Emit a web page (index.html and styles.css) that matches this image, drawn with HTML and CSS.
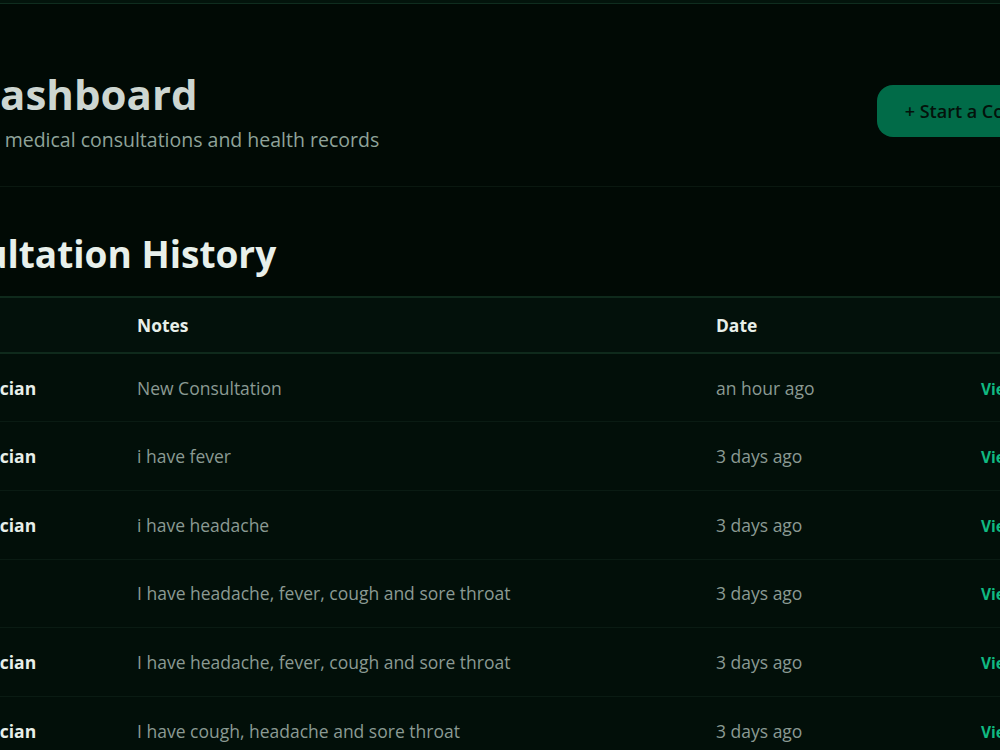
FILE: index.html
```html
<!DOCTYPE html>
<html lang="en">
<head>
  <meta charset="UTF-8">
  <meta name="viewport" content="width=device-width, initial-scale=1.0">
  <title>Dashboard</title>
  <link rel="stylesheet" href="styles.css">
</head>
<body>
  <div class="topbar"></div>
  <div class="page">
    <header class="dash-header">
      <div class="dash-title">
        <h1>Dashboard</h1>
        <p>Your medical consultations and health records</p>
      </div>
      <button class="start-btn">+ Start a Consultation</button>
    </header>

    <section class="history">
      <h2>Consultation History</h2>
      <table class="history-table">
        <thead>
          <tr><th class="c-doc">Doctor</th><th class="c-notes">Notes</th><th class="c-date">Date</th><th class="c-act"></th></tr>
        </thead>
        <tbody>
          <tr><td class="c-doc">General Physician</td><td class="c-notes">New Consultation</td><td class="c-date">an hour ago</td><td class="c-act"><a href="#">View Report</a></td></tr>
          <tr><td class="c-doc">General Physician</td><td class="c-notes">i have fever</td><td class="c-date">3 days ago</td><td class="c-act"><a href="#">View Report</a></td></tr>
          <tr><td class="c-doc">General Physician</td><td class="c-notes">i have headache</td><td class="c-date">3 days ago</td><td class="c-act"><a href="#">View Report</a></td></tr>
          <tr><td class="c-doc"></td><td class="c-notes">I have headache, fever, cough and sore throat</td><td class="c-date">3 days ago</td><td class="c-act"><a href="#">View Report</a></td></tr>
          <tr><td class="c-doc">General Physician</td><td class="c-notes">I have headache, fever, cough and sore throat</td><td class="c-date">3 days ago</td><td class="c-act"><a href="#">View Report</a></td></tr>
          <tr><td class="c-doc">General Physician</td><td class="c-notes">I have cough, headache and sore throat</td><td class="c-date">3 days ago</td><td class="c-act"><a href="#">View Report</a></td></tr>
        </tbody>
      </table>
    </section>
  </div>
</body>
</html>
```

FILE: styles.css
```css
* { box-sizing: border-box; }
body { margin: 0; background: #010a05; font-family: "Open Sans", "Noto Sans", sans-serif; color: #e6eee9; overflow: hidden; }
.topbar { height: 4px; background: #03140c; border-bottom: 1px solid #0f2d1f; }

.page { width: 1300px; margin-left: -140px; }

.dash-header { display: flex; justify-content: space-between; align-items: center; padding: 32px 39px 0 109px; height: 183px; border-bottom: 1px solid #0a1810; }
.dash-title h1 { margin: 0; font-size: 42px; font-weight: 700; color: #cdd6d1; line-height: 50px; }
.dash-title p { margin: 7px 0 0 -12px; font-size: 19.5px; color: #8fa39a; }
.start-btn { background: #016b48; color: #04120b; border: none; border-radius: 16px; height: 52px; padding: 0 28px; font-family: inherit; font-size: 18px; font-weight: 600; }

.history { padding-top: 44px; }
.history h2 { margin: 0 0 19px 34px; font-size: 37px; font-weight: 700; color: #e8f0eb; line-height: 46px; }

.history-table { width: 100%; border-collapse: collapse; background: #020f09; border-top: 2px solid #0f2a1c; }
.history-table th { background: #03110b; text-align: left; font-size: 17.4px; font-weight: 700; color: #e8efe9; height: 56px; border-bottom: 2px solid #0f2a1c; padding: 0 20px; }
.history-table td { height: 68.7px; border-bottom: 1px solid #0a1b13; font-size: 17.5px; color: #8b9a93; padding: 0 20px; }
.history-table td.c-doc { font-weight: 700; color: #e8efe9; }
.c-doc { width: 257px; }
.c-notes { width: 579px; }
.c-date { width: 265px; }
.c-act a { color: #10b981; font-weight: 700; text-decoration: none; font-size: 15.5px; }
```
